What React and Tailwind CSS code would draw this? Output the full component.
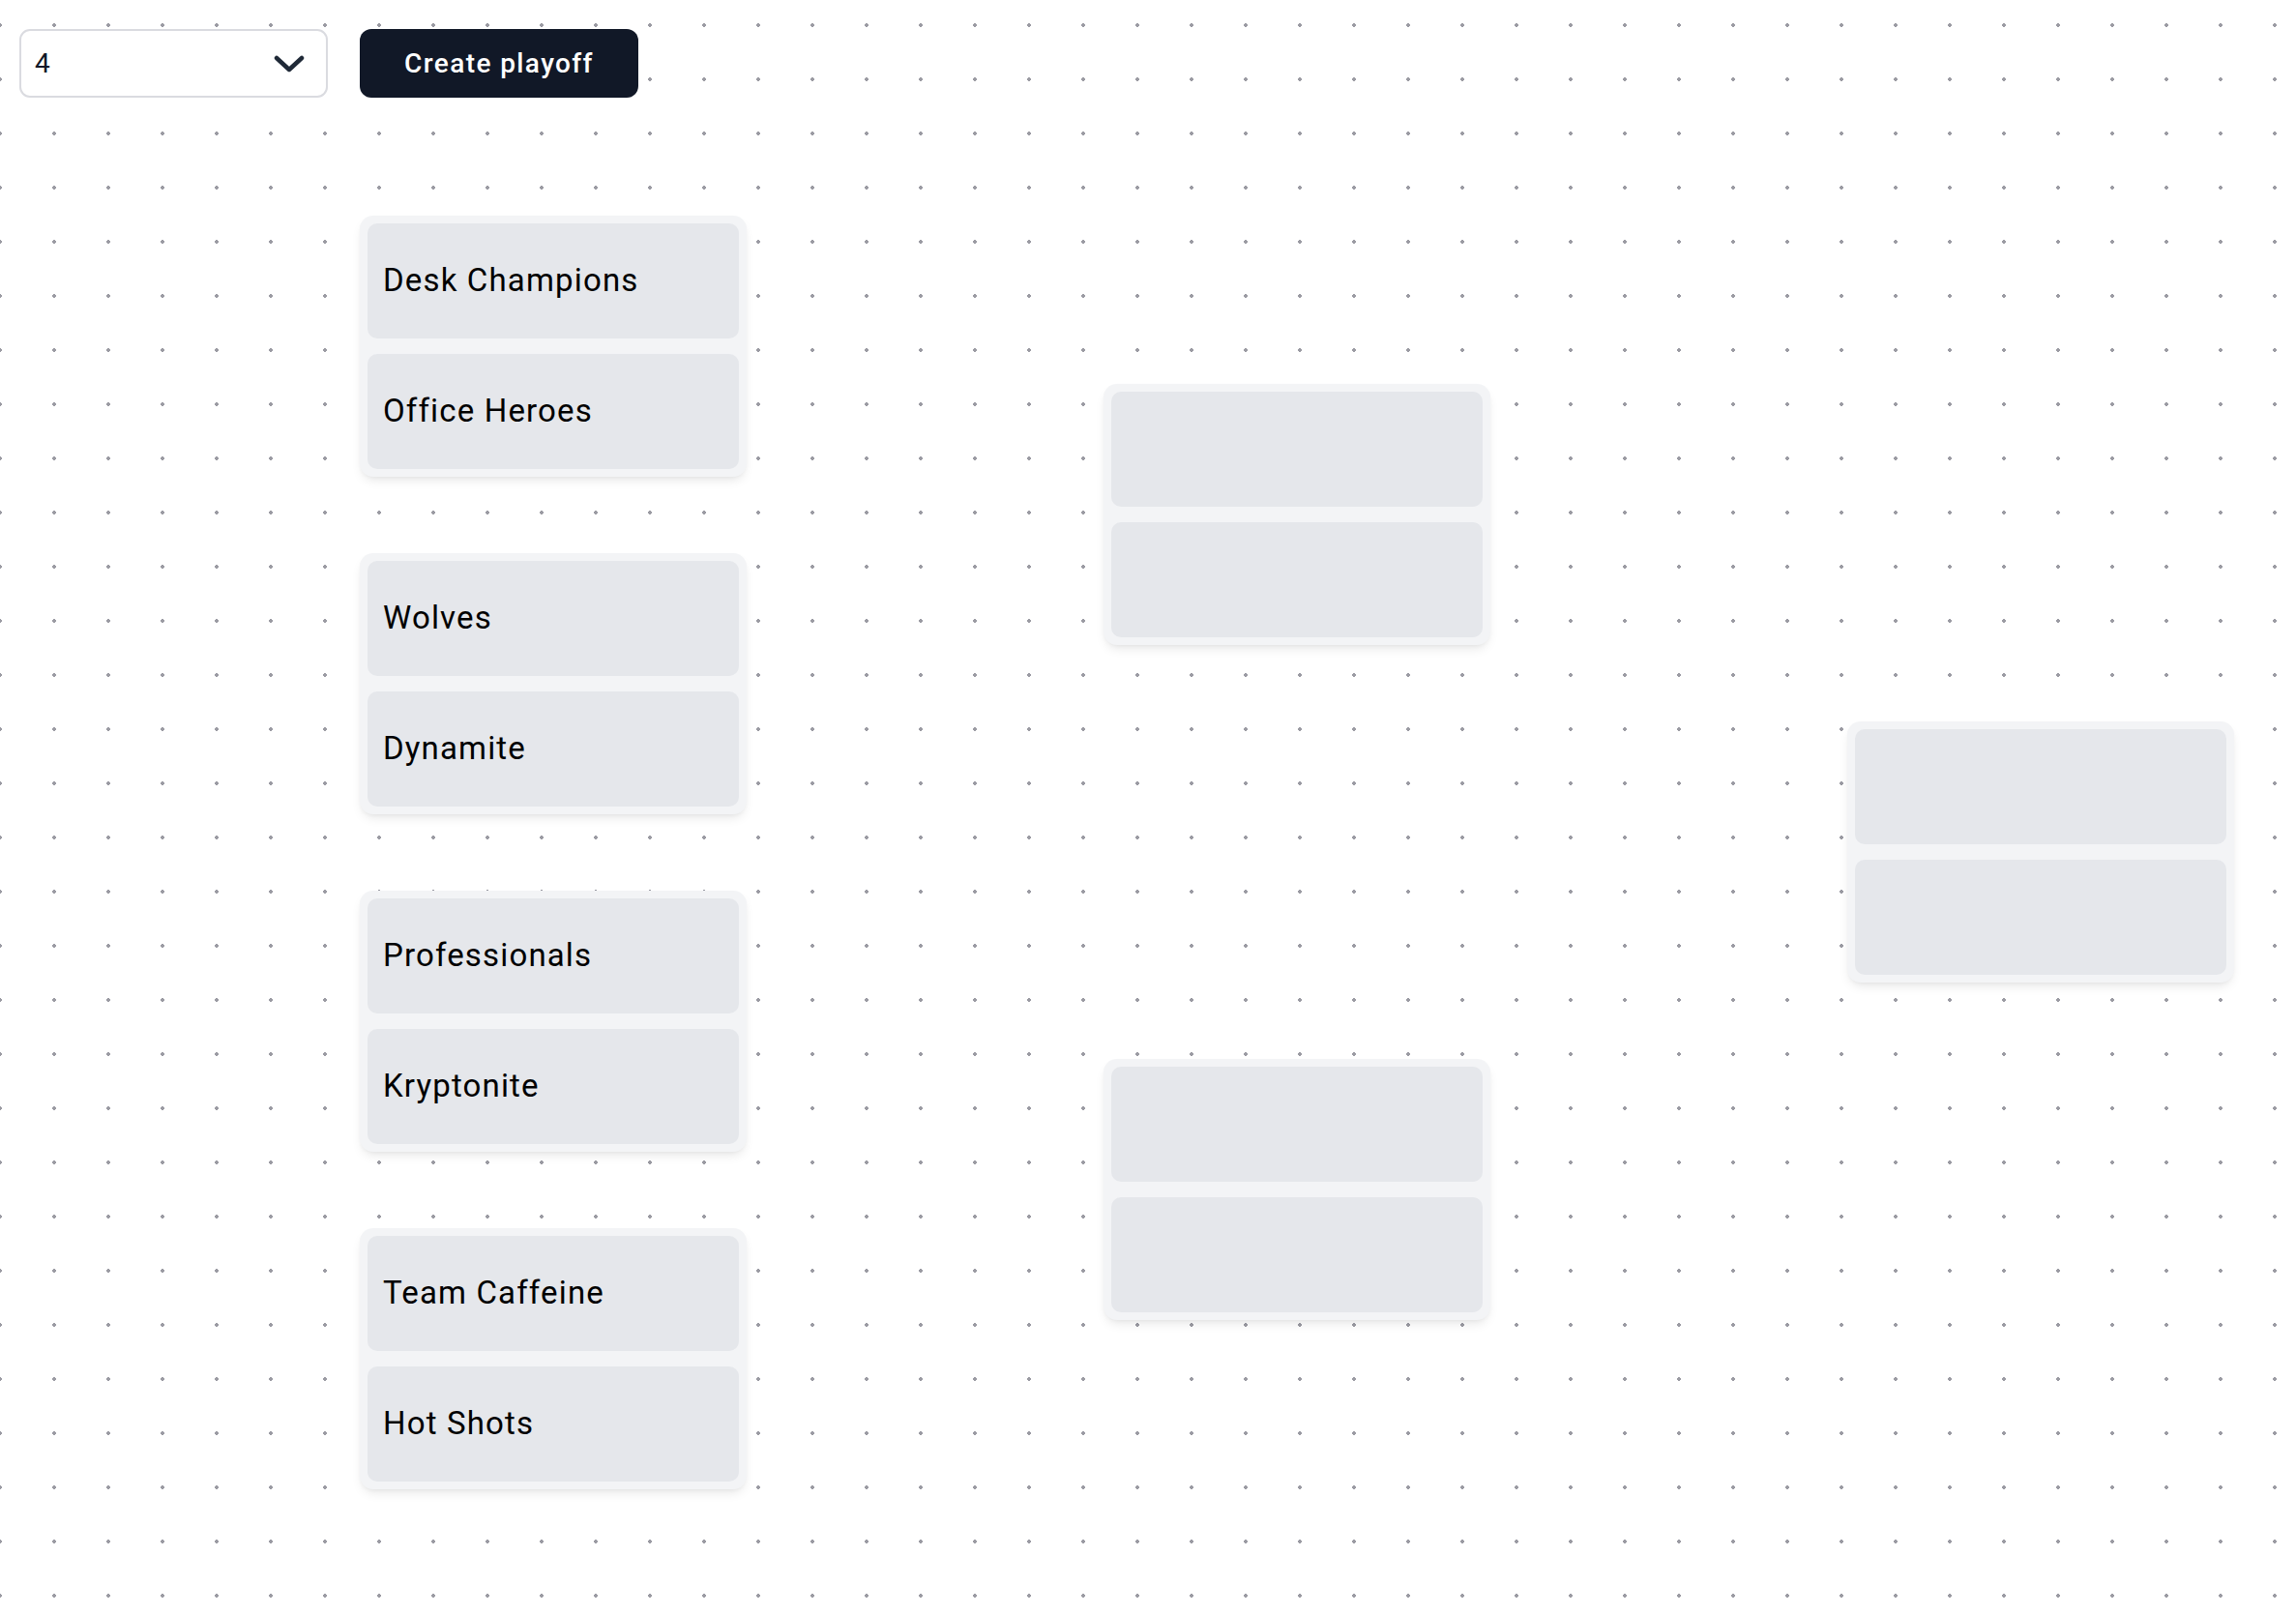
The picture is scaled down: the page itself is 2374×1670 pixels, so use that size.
import { useState } from 'react'

const rounds = [
  [['Desk Champions', 'Office Heroes'], ['Wolves', 'Dynamite'], ['Professionals', 'Kryptonite'], ['Team Caffeine', 'Hot Shots']],
  [['', ''], ['', '']],
  [['', '']],
]

function Match({ teams }) {
  return (
    <div className="w-[400px] h-[270px] p-2 flex flex-col gap-4 bg-[#f3f4f6] rounded-[14px] shadow-[0_6px_12px_-3px_rgba(0,0,0,0.10),0_2px_5px_-2px_rgba(0,0,0,0.06)]">
      {teams.map((t, i) => (
        <div key={i} className="flex-1 flex items-center px-4 bg-[#e5e7eb] rounded-[10px] text-[33px] tracking-[0.035em] text-black">
          {t}
        </div>
      ))}
    </div>
  )
}

export default function App() {
  const [size] = useState(4)

  return (
    <div className="min-h-screen w-full bg-white bg-[radial-gradient(circle,#9b9ba3_1.6px,transparent_1.8px)] bg-[size:56px_56px] bg-[position:-28px_-2px] font-['Roboto',sans-serif] pl-5 pt-[30px]">
      {/* Controls */}
      <div className="flex items-center gap-[33px]">
        <div className="w-[319px] h-[71px] flex items-center justify-between pl-[14px] pr-[22px] bg-white border-2 border-[#dadbe0] rounded-[11px] text-[28px] text-[#111827]">
          <span>{size}</span>
          <svg width="32" height="18" viewBox="0 0 32 18" fill="none">
            <polyline points="3,3 16,15 29,3" stroke="#1f2937" strokeWidth="4.5" strokeLinecap="round" strokeLinejoin="round" />
          </svg>
        </div>
        <button className="w-[288px] h-[71px] bg-[#111827] text-white rounded-[12px] text-[28px] font-medium tracking-wider">
          Create playoff
        </button>
      </div>

      {/* Bracket */}
      <div className="flex gap-[369px] ml-[352px] mt-[82px]">
        {rounds.map((matches, r) => (
          <div key={r} className="w-[400px] h-[1396px] flex flex-col justify-around">
            {matches.map((m, i) => <Match key={i} teams={m} />)}
          </div>
        ))}
      </div>
    </div>
  )
}
